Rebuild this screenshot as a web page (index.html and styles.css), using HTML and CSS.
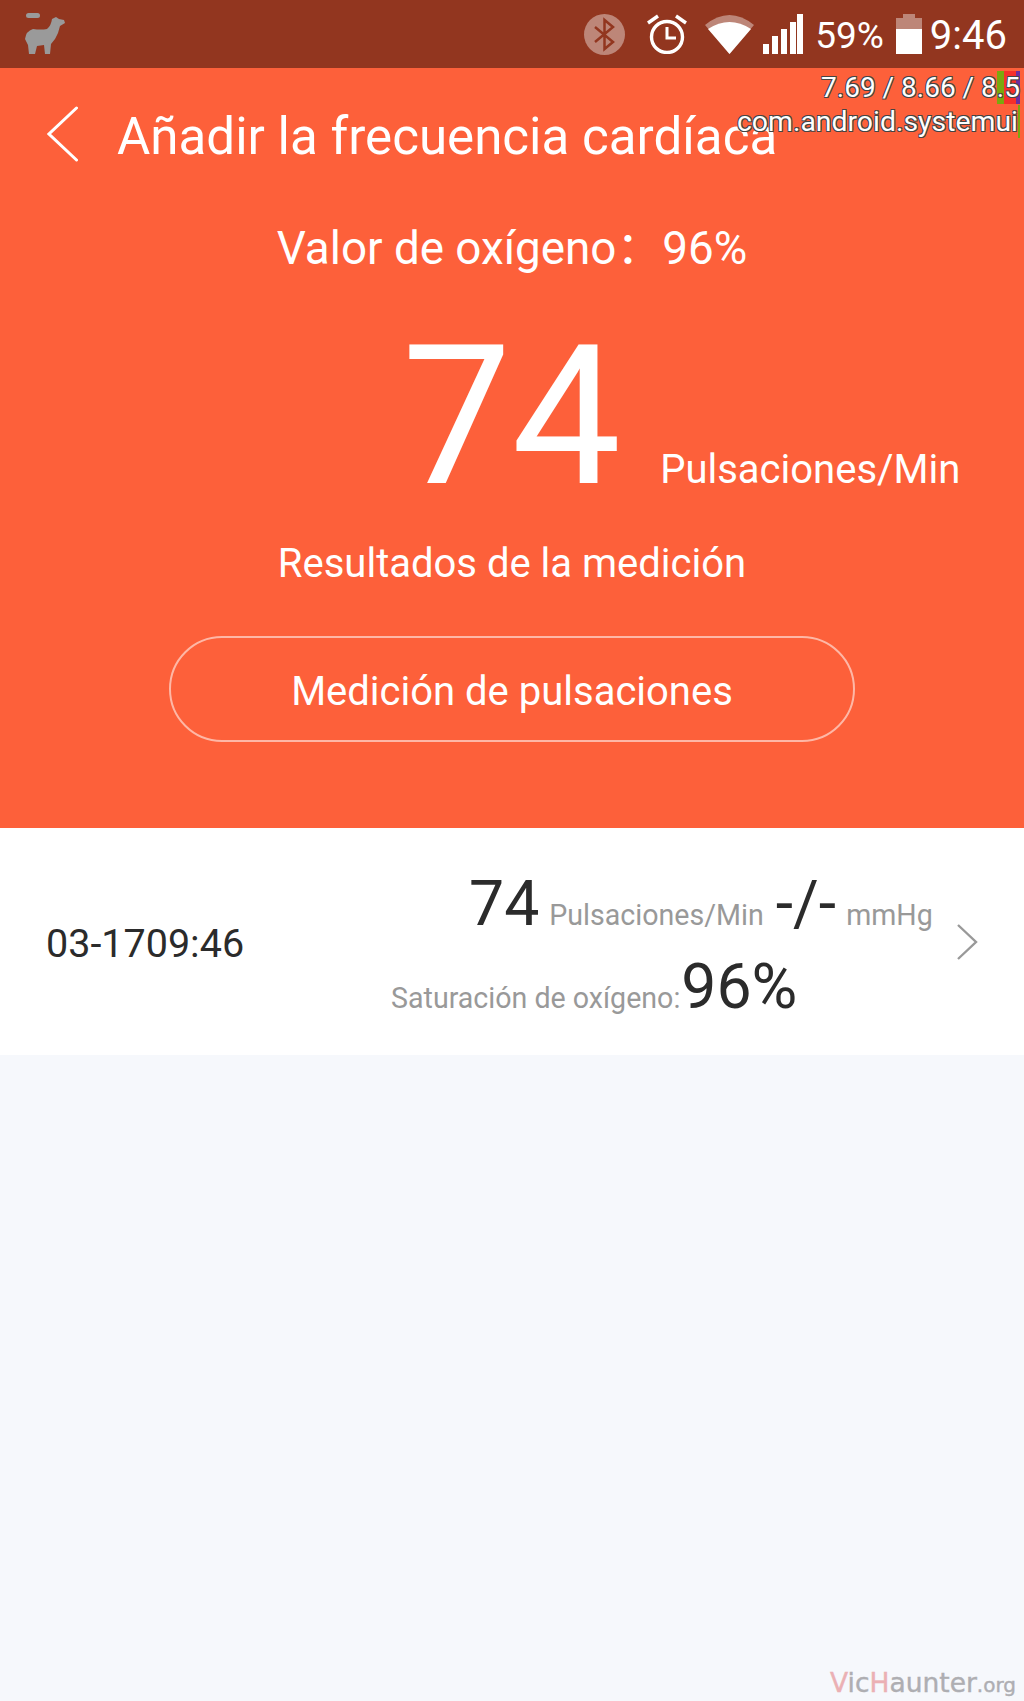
FILE: index.html
```html
<!DOCTYPE html>
<html lang="es">
<head>
  <meta charset="UTF-8">
  <meta name="viewport" content="width=device-width, initial-scale=1.0">
  <title>Añadir la frecuencia cardíaca</title>
  <link rel="stylesheet" href="styles.css">
</head>
<body>

  <div class="status-bar">
    <svg class="icono-llama" viewBox="0 0 40 42" width="40" height="42">
      <rect x="1" y="0" width="14" height="5" rx="2.5" fill="#9a9a9a"/>
      <path fill="#9a9a9a" d="M27 6 L31 4 L34 6 L39 7 L40 10 L35 13 L33 20 L30 26 L26 31 L25 41 L20 41 L19 32 L12 33 L10 41 L4 41 L3 32 L0 26 Q1 18 8 16 Q16 17 22 16 Q26 13 27 6 Z"/>
    </svg>
    <div class="status-derecha">
      <svg class="icono-bt" viewBox="0 0 41 41" width="41" height="41">
        <circle cx="20.5" cy="20.5" r="20.5" fill="#fff" opacity="0.4"/>
        <path fill="none" stroke="#92361f" stroke-width="2.5" d="M11 13 L29 28 L20.500 35 L20.500 6 L29 13 L11 28"/>
      </svg>
      <svg class="icono-alarma" viewBox="0 0 40 40" width="40" height="40">
        <circle cx="20" cy="23" r="15.500" fill="none" stroke="#fff" stroke-width="3.4"/>
        <path fill="none" stroke="#fff" stroke-width="3" d="M20 13 V24 H29"/>
        <path fill="none" stroke="#fff" stroke-width="3.4" d="M1 9 L11 2 M39 9 L29 2"/>
      </svg>
      <svg class="icono-wifi" viewBox="0 0 49 40" width="49" height="40">
        <path fill="#fff" opacity="0.4" d="M0 11 Q24.500 -9 49 11 L24.500 40 Z"/>
        <path fill="#fff" d="M3 15 Q24.500 1 46 15 L24.500 40 Z"/>
      </svg>
      <svg class="icono-senal" viewBox="0 0 40 40" width="40" height="40">
        <path fill="#fff" d="M0 30 H6 V40 H0 Z M9 22 H15 V40 H9 Z M18 15 H24 V40 H18 Z M27 8 H33 V40 H27 Z M34 0 H40 V40 H34 Z"/>
      </svg>
      <span class="status-texto texto-bateria">59%</span>
      <svg class="icono-bateria" viewBox="0 0 26 40" width="26" height="40">
        <path fill="#fff" opacity="0.4" d="M7 0 H19 V4 H26 V15 H0 V4 H7 Z"/>
        <rect x="0" y="15" width="26" height="25" fill="#fff"/>
      </svg>
      <span class="status-texto texto-hora">9:46</span>
    </div>
  </div>

  <div class="panel">
    <div class="cabecera">
      <svg class="icono-volver" viewBox="0 0 31 56" width="31" height="56">
        <path fill="none" stroke="#fff" stroke-width="3" stroke-linecap="round" d="M29.500 2 L2 28 L29.500 54"/>
      </svg>
      <h1 class="titulo">Añadir la frecuencia cardíaca</h1>
    </div>
    <p class="oxigeno">Valor de oxígeno：<span class="oxigeno-valor">96%</span></p>
    <div class="pulso">
      <span class="pulso-numero">74</span>
      <span class="pulso-unidad">Pulsaciones/Min</span>
    </div>
    <p class="resultados">Resultados de la medición</p>
    <button class="boton-medir">Medición de pulsaciones</button>
  </div>

  <div class="fila">
    <span class="fila-fecha">03-1709:46</span>
    <div class="fila-datos">
      <div class="fila-linea">
        <span class="dato-grande">74</span>
        <span class="dato-gris">Pulsaciones/Min</span>
        <span class="dato-grande dato-presion">-/-</span>
        <span class="dato-gris">mmHg</span>
      </div>
      <div class="fila-linea linea-oxigeno">
        <span class="dato-gris">Saturación de oxígeno:</span><span class="dato-grande">96%</span>
      </div>
    </div>
    <svg class="icono-flecha" viewBox="0 0 22 36" width="22" height="36">
      <path fill="none" stroke="#999" stroke-width="2.4" d="M2 1 L20 18 L2 35"/>
    </svg>
  </div>

  <!-- overlay de depuracion de android -->
  <div class="debug">
    <div class="debug-linea debug-tiempos">7.69 / 8.66 / 8<span class="debug-verde">.</span><span class="debug-rojo">5</span></div>
    <div class="debug-linea"><span class="debug-paquete">com.android.systemui</span></div>
  </div>

  <div class="marca"><span class="marca-rosa">V</span>ic<span class="marca-rosa">H</span>aunter<span class="marca-org">.org</span></div>

</body>
</html>
```

FILE: styles.css
```css
body {
  margin: 0;
  padding: 0;
  min-height: 1701px;
  background-color: #f6f8fc;
  font-family: Roboto, "Noto Sans CJK SC", "Liberation Sans", sans-serif;
  overflow-x: hidden;
  position: relative;
}

.status-bar {
  height: 68px;
  background-color: #92361f;
  display: flex;
  justify-content: space-between;
  align-items: center;
  padding: 0 17px 0 25px;
  box-sizing: border-box;
}

.status-derecha {
  display: flex;
  align-items: center;
}

.icono-bt { margin-right: 22px; }
.icono-alarma { margin-right: 18px; }
.icono-wifi { margin-right: 9px; }
.icono-senal { margin-right: 12px; }
.icono-bateria { margin-right: 8px; }

.status-texto {
  color: white;
  font-size: 37px;
  line-height: 68px;
  padding-top: 3px;
}

.texto-bateria {
  margin-right: 12px;
}

.texto-hora {
  font-size: 40px;
}

.panel {
  height: 760px;
  background-color: #fd603a;
  color: white;
  display: flex;
  flex-direction: column;
  align-items: center;
}

.cabecera {
  width: 100%;
  height: 130px;
  display: flex;
  align-items: center;
  padding-left: 47px;
  box-sizing: border-box;
}

.icono-volver {
  margin-right: 39px;
  margin-top: 2px;
}

.titulo {
  margin: 6px 0 0;
  font-size: 51.1px;
  font-weight: 400;
  white-space: nowrap;
}

.oxigeno {
  margin: 21px 0 0;
  font-size: 45.8px;
  line-height: 60px;
}

.pulso {
  width: 100%;
  height: 190px;
  margin-top: 43px;
  display: flex;
  align-items: baseline;
  padding-left: 402px;
  box-sizing: border-box;
}

.pulso-numero {
  font-size: 195px;
  font-weight: 400;
  line-height: 190px;
}

.pulso-unidad {
  font-size: 40px;
  margin-left: 39px;
}

.resultados {
  margin: 22px 0 0;
  font-size: 40px;
  line-height: 60px;
}

.boton-medir {
  width: 686px;
  height: 106px;
  margin-top: 42px;
  padding-top: 5px;
  background: transparent;
  border: 2px solid rgba(255, 255, 255, 0.55);
  border-radius: 53px;
  color: white;
  font-family: inherit;
  font-size: 40px;
}

.fila {
  height: 227px;
  background-color: white;
  display: flex;
  align-items: center;
  padding: 10px 46px 0;
  box-sizing: border-box;
}

.fila-fecha {
  font-size: 39.5px;
  color: #2b2b2b;
  width: 345px;
  margin-top: -6px;
}

.fila-datos {
  display: flex;
  flex-direction: column;
  flex: 1;
  gap: 7px;
}

.fila-linea {
  display: flex;
  align-items: baseline;
  gap: 10px;
  padding-left: 78px;
  height: 76px;
}

.linea-oxigeno {
  gap: 1px;
  padding-left: 0;
}

.dato-grande {
  font-size: 62.5px;
  color: #2b2b2b;
}

.dato-presion {
  margin-left: 2px;
}

.dato-gris {
  font-size: 28.6px;
  color: #999;
}

.icono-flecha {
  position: absolute;
  left: 956px;
  top: 924px;
}

.debug {
  position: absolute;
  top: 71px;
  right: 4px;
  text-align: right;
  color: white;
  font-size: 28.4px;
  line-height: 34px;
  text-shadow: -1px -1px 0 #444, 1px -1px 0 #444, -1px 1px 0 #444, 1px 1px 0 #444;
}

.debug-tiempos {
  font-size: 28px;
}

.debug-verde {
  background-color: #7aa80e;
}

.debug-rojo {
  background: linear-gradient(to right, #f5302a 72%, #6c2ea0 72%);
}

.debug-paquete {
  border-right: 2px solid #7aa80e;
}

.marca {
  position: absolute;
  right: 8px;
  bottom: 3px;
  font-family: "DejaVu Sans", sans-serif;
  font-size: 26.5px;
  color: #aeaeb2;
  -webkit-text-stroke: 0.4px currentColor;
}

.marca-rosa {
  color: #ebb0b4;
}

.marca-org {
  font-size: 20px;
}
```
